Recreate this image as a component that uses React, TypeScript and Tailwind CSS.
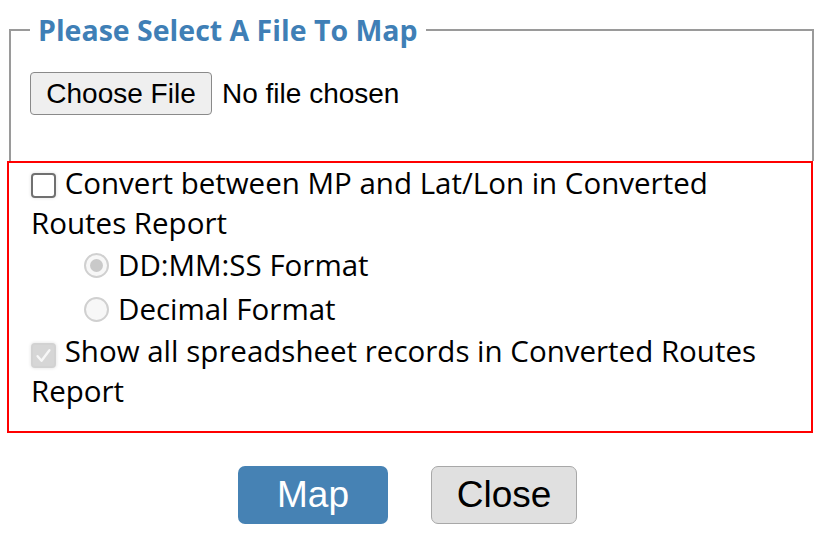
import React from 'react';

const body = { fontFamily: '"Open Sans", "Noto Sans", sans-serif' };
const arial = { fontFamily: '"Liberation Sans", Arial, sans-serif' };

function Check({ checked = false, disabled = false }: { checked?: boolean; disabled?: boolean }) {
  return (
    <span
      className={
        'inline-flex h-[25px] w-[25px] shrink-0 items-center justify-center rounded-[4px] align-[-4px] shadow-[0_0_3px_1px_rgba(0,0,0,0.08)] ' +
        (disabled ? 'border-2 border-[#d2d2d2] bg-[#d6d6d6]' : 'border-2 border-[#707070] bg-white')
      }
    >
      {checked && (
        <svg viewBox="0 0 16 16" className="h-[21px] w-[21px]" fill="none" stroke="#f7f7f7" strokeWidth="1.8" strokeLinecap="round" strokeLinejoin="round">
          <path d="M3.5 8.5l3 3.5 6-8" />
        </svg>
      )}
    </span>
  );
}

function Radio({ checked = false }: { checked?: boolean }) {
  return (
    <span className="inline-flex h-[25px] w-[25px] shrink-0 items-center justify-center rounded-full border-2 border-[#d0d0d0] bg-[#f7f7f7]">
      {checked && <span className="h-[13px] w-[13px] rounded-full bg-[#c9c9c9]" />}
    </span>
  );
}

export default function App() {
  return (
    <div className="h-[536px] w-[823px] overflow-hidden bg-white pt-[13px] pl-[7px]">
      <fieldset className="ml-[2px] w-[805px] border-2 border-b-0 border-[#9a9a9a] pt-[25px] pb-[46px] pl-[19px]">
        <legend
          className="px-2 text-[28.5px] font-bold leading-[34px] text-[#3f7fb6]"
          style={body}
        >
          Please Select A File To Map
        </legend>
        <div className="flex items-center gap-[10px]" style={arial}>
          <button className="h-[43px] w-[182px] rounded-[4px] border border-[#8a8a8a] bg-[#efefef] text-[28px] text-black">
            Choose File
          </button>
          <span className="text-[28px] text-black">No file chosen</span>
        </div>
      </fieldset>

      <div className="w-[806px] border-2 border-[#ff0000] pb-[20px] pl-[22px] text-[29.5px] text-black" style={body}>
        <p className="w-[745px] leading-[40px]">
          <Check /> <span className="ml-[1px]">Convert between MP and Lat/Lon in Converted Routes Report</span>
        </p>
        <div className="flex h-[44px] items-center gap-[9px] pl-[53px]">
          <Radio checked />
          <span>DD:MM:SS Format</span>
        </div>
        <div className="flex h-[44px] items-center gap-[9px] pl-[53px]">
          <Radio />
          <span>Decimal Format</span>
        </div>
        <p className="w-[745px] leading-[40px]">
          <Check checked disabled /> <span className="ml-[1px]">Show all spreadsheet records in Converted Routes Report</span>
        </p>
      </div>

      <div className="mt-[33px] flex justify-center gap-[43px] pr-[15px]" style={arial}>
        <button className="h-[58px] w-[150px] rounded-[7px] bg-[#4682b4] text-[37px] text-white">Map</button>
        <button className="h-[58px] w-[146px] rounded-[7px] border border-[#a8a8a8] bg-[#e0e0e0] text-[37px] text-black">
          Close
        </button>
      </div>
    </div>
  );
}
